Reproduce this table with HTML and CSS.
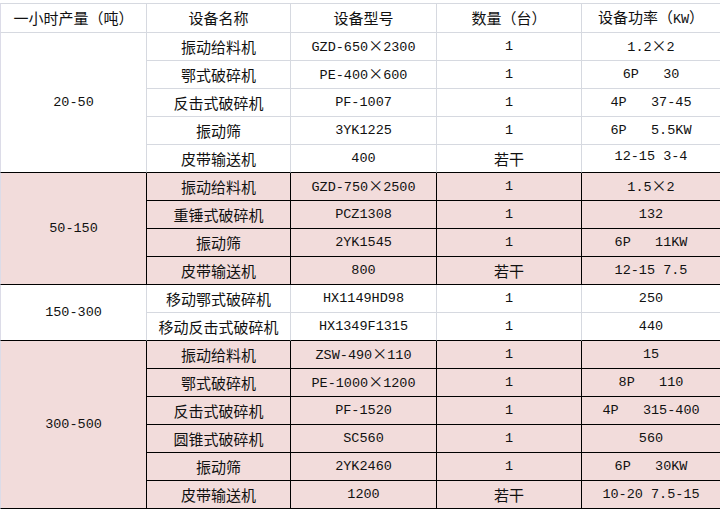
FILE: index.html
```html
<!DOCTYPE html>
<html lang="zh-CN">
<head>
<meta charset="utf-8">
<title>设备配置表</title>
<link rel="stylesheet" href="styles.css">
</head>
<body>
<div class="sheet">
<table class="grid">
  <colgroup>
    <col class="c1"><col class="c2"><col class="c3"><col class="c4"><col class="c5">
  </colgroup>
  <thead>
    <tr class="head">
      <th class="first">一小时产量（吨）</th>
      <th>设备名称</th>
      <th>设备型号</th>
      <th>数量（台）</th>
      <th class="last">设备功率（<span class="n">KW</span>）</th>
    </tr>
  </thead>
  <tbody>
    <tr>
      <td class="first n range b" rowspan="5">20-50</td>
      <td>振动给料机</td><td class="n">GZD-650<span class="x">×</span>2300</td><td class="n">1</td><td class="n last">1.2<span class="x">×</span>2</td>
    </tr>
    <tr><td>鄂式破碎机</td><td class="n">PE-400<span class="x">×</span>600</td><td class="n">1</td><td class="n last">6P   30</td></tr>
    <tr><td>反击式破碎机</td><td class="n">PF-1007</td><td class="n">1</td><td class="n last">4P   37-45</td></tr>
    <tr><td>振动筛</td><td class="n">3YK1225</td><td class="n">1</td><td class="n last">6P   5.5KW</td></tr>
    <tr class="b"><td>皮带输送机</td><td class="n">400</td><td>若干</td><td class="n last up">12-15 3-4</td></tr>

    <tr class="p">
      <td class="first n range" rowspan="4">50-150</td>
      <td>振动给料机</td><td class="n">GZD-750<span class="x">×</span>2500</td><td class="n">1</td><td class="n last">1.5<span class="x">×</span>2</td>
    </tr>
    <tr class="p"><td>重锤式破碎机</td><td class="n">PCZ1308</td><td class="n">1</td><td class="n last">132</td></tr>
    <tr class="p"><td>振动筛</td><td class="n">2YK1545</td><td class="n">1</td><td class="n last">6P   11KW</td></tr>
    <tr class="p"><td>皮带输送机</td><td class="n">800</td><td>若干</td><td class="n last">12-15 7.5</td></tr>

    <tr>
      <td class="first n range b" rowspan="2">150-300</td>
      <td>移动鄂式破碎机</td><td class="n">HX1149HD98</td><td class="n">1</td><td class="n last">250</td>
    </tr>
    <tr class="b"><td>移动反击式破碎机</td><td class="n">HX1349F1315</td><td class="n">1</td><td class="n last">440</td></tr>

    <tr class="p">
      <td class="first n range" rowspan="6">300-500</td>
      <td>振动给料机</td><td class="n">ZSW-490<span class="x">×</span>110</td><td class="n">1</td><td class="n last">15</td>
    </tr>
    <tr class="p"><td>鄂式破碎机</td><td class="n">PE-1000<span class="x">×</span>1200</td><td class="n">1</td><td class="n last">8P   110</td></tr>
    <tr class="p"><td>反击式破碎机</td><td class="n">PF-1520</td><td class="n">1</td><td class="n last">4P   315-400</td></tr>
    <tr class="p"><td>圆锥式破碎机</td><td class="n">SC560</td><td class="n">1</td><td class="n last">560</td></tr>
    <tr class="p"><td>振动筛</td><td class="n">2YK2460</td><td class="n">1</td><td class="n last">6P   30KW</td></tr>
    <tr class="p"><td>皮带输送机</td><td class="n">1200</td><td>若干</td><td class="n last">10-20 7.5-15</td></tr>
  </tbody>
</table>
</div>
</body>
</html>
```
FILE: styles.css
```css
html, body {
  margin: 0;
  padding: 0;
  background: #ffffff;
}

.sheet {
  padding-top: 3px;
  width: 720px;
  overflow: hidden;
}

.grid {
  width: 720px;
  table-layout: fixed;
  border-collapse: separate;
  border-spacing: 0;
  font-family: "Noto Sans CJK SC", "Liberation Sans", sans-serif;
  font-size: 15px;
  color: #111111;
}

.c1 { width: 147px; }
.c2 { width: 144px; }
.c3 { width: 146px; }
.c4 { width: 145px; }
.c5 { width: 138px; }

.grid th,
.grid td {
  height: 27px;
  padding: 0;
  text-align: center;
  vertical-align: middle;
  font-weight: normal;
  line-height: 16px;
  white-space: pre;
  border-right: 1px solid #d6d9e0;
  border-bottom: 1px solid #d6d9e0;
  overflow: hidden;
  box-sizing: content-box;
}

.grid th {
  border-top: 1px solid #d6d9e0;
  height: 28px;
}

.grid .first {
  border-left: 1px solid #dcdce8;
}

.grid .last {
  border-right: none;
}

.n {
  font-family: "Liberation Mono", "Noto Sans CJK SC", monospace;
  font-size: 13.5px;
}

.x {
  font-family: "Noto Sans CJK SC", sans-serif;
  font-size: 15px;
  line-height: 14px;
  display: inline-block;
  width: 15px;
  text-align: center;
}

.range {
  background: #ffffff;
}

.grid td.up {
  vertical-align: top;
  padding-top: 4px;
  height: 23px;
}

/* pink groups with dark rules */
.p td,
.p .range {
  background: #f2dcdb;
  border-right-color: #000000;
  border-bottom-color: #000000;
}

.p td.last {
  border-right: none;
}

.p td.first {
  border-left-color: #dcdce8;
}

/* white rows that sit right above a pink group */
.b td,
td.b {
  border-bottom-color: #000000;
}
```
